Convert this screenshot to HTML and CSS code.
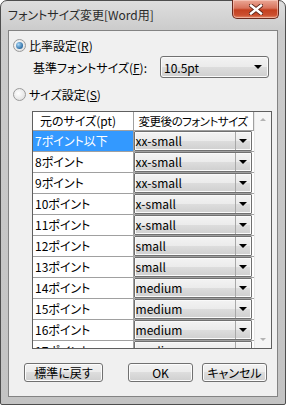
FILE: index.html
```html
<!DOCTYPE html>
<html lang="ja">
<head>
    <meta charset="UTF-8">
    <title>フォントサイズ変更[Word用]</title>
    <link rel="stylesheet" href="styles.css">
</head>
<body>

    <div class="window">
        <div class="titlebar">
            <span class="title">フォントサイズ変更[Word用]</span>
            <div class="close-btn">
                <svg width="14" height="11" viewBox="0 0 14 11">
                    <path d="M2 1.5 L12 9.5 M12 1.5 L2 9.5" stroke="#5a2418" stroke-width="4.2" stroke-linecap="square"/>
                    <path d="M2 1.5 L12 9.5 M12 1.5 L2 9.5" stroke="#ffffff" stroke-width="2.4" stroke-linecap="square"/>
                </svg>
            </div>
        </div>

        <div class="client">
            <div class="radio-row first">
                <span class="radio checked"></span>
                <span>比率設定(<u>R</u>)</span>
            </div>
            <div class="base-row">
                <span class="base-label">基準フォントサイズ(<u>F</u>):</span>
                <div class="combo big">
                    <span class="combo-text">10.5pt</span>
                    <span class="arrow"></span>
                </div>
            </div>
            <div class="radio-row second">
                <span class="radio"></span>
                <span>サイズ設定(<u>S</u>)</span>
            </div>

            <div class="grid">
                <div class="grid-body">
                    <div class="grid-head">
                        <div class="cell1">元のサイズ(pt)</div>
                        <div class="cell2">変更後のフォントサイズ</div>
                    </div>
                    <div class="row selected">
                        <div class="cell1">7ポイント以下</div>
                        <div class="cell2"><div class="combo"><span class="combo-text">xx-small</span><span class="arrow-box"><span class="arrow"></span></span></div></div>
                    </div>
                    <div class="row">
                        <div class="cell1">8ポイント</div>
                        <div class="cell2"><div class="combo"><span class="combo-text">xx-small</span><span class="arrow-box"><span class="arrow"></span></span></div></div>
                    </div>
                    <div class="row">
                        <div class="cell1">9ポイント</div>
                        <div class="cell2"><div class="combo"><span class="combo-text">xx-small</span><span class="arrow-box"><span class="arrow"></span></span></div></div>
                    </div>
                    <div class="row">
                        <div class="cell1">10ポイント</div>
                        <div class="cell2"><div class="combo"><span class="combo-text">x-small</span><span class="arrow-box"><span class="arrow"></span></span></div></div>
                    </div>
                    <div class="row">
                        <div class="cell1">11ポイント</div>
                        <div class="cell2"><div class="combo"><span class="combo-text">x-small</span><span class="arrow-box"><span class="arrow"></span></span></div></div>
                    </div>
                    <div class="row">
                        <div class="cell1">12ポイント</div>
                        <div class="cell2"><div class="combo"><span class="combo-text">small</span><span class="arrow-box"><span class="arrow"></span></span></div></div>
                    </div>
                    <div class="row">
                        <div class="cell1">13ポイント</div>
                        <div class="cell2"><div class="combo"><span class="combo-text">small</span><span class="arrow-box"><span class="arrow"></span></span></div></div>
                    </div>
                    <div class="row">
                        <div class="cell1">14ポイント</div>
                        <div class="cell2"><div class="combo"><span class="combo-text">medium</span><span class="arrow-box"><span class="arrow"></span></span></div></div>
                    </div>
                    <div class="row">
                        <div class="cell1">15ポイント</div>
                        <div class="cell2"><div class="combo"><span class="combo-text">medium</span><span class="arrow-box"><span class="arrow"></span></span></div></div>
                    </div>
                    <div class="row">
                        <div class="cell1">16ポイント</div>
                        <div class="cell2"><div class="combo"><span class="combo-text">medium</span><span class="arrow-box"><span class="arrow"></span></span></div></div>
                    </div>
                    <div class="row">
                        <div class="cell1">17ポイント</div>
                        <div class="cell2"><div class="combo"><span class="combo-text">medium</span><span class="arrow-box"><span class="arrow"></span></span></div></div>
                    </div>
                </div>
                <div class="vscroll">
                    <span class="sb-up"></span>
                    <span class="sb-down"></span>
                </div>
            </div>

            <div class="buttons">
                <div class="btn reset">標準に戻す</div>
                <div class="btn ok">OK</div>
                <div class="btn cancel">キャンセル</div>
            </div>
        </div>
    </div>

</body>
</html>
```

FILE: styles.css
```css
body {
    margin: 0;
    font-family: "Noto Sans CJK JP", "DejaVu Sans", sans-serif;
    font-feature-settings: "palt";
    font-size: 12px;
    color: #000;
    background: #ffffff;
}
.window {
    width: 286px;
    height: 405px;
    box-sizing: border-box;
    border: 1px solid #4e4e4e;
    border-radius: 7px 7px 2px 2px;
    background: linear-gradient(#dedede, #cbcbcb 30px, #c3c3c3);
    padding: 0 7px 7px;
    display: flex;
    flex-direction: column;
}
.titlebar {
    height: 29px;
    display: flex;
    align-items: flex-start;
}
.title {
    flex: 1;
    padding-top: 7px;
    line-height: 14px;
    color: #2a2a2a;
}
.close-btn {
    width: 47px;
    height: 19px;
    box-sizing: border-box;
    margin-top: -1px;
    margin-right: -1px;
    border: 1px solid #6a2a1e;
    border-top: none;
    border-radius: 0 0 5px 5px;
    background: linear-gradient(#eba896, #d8735c 45%, #c4401f 55%, #cc5030 85%, #e4916f);
    box-shadow: inset 0 0 0 1px rgba(255, 220, 210, 0.5);
    display: flex;
    align-items: center;
    justify-content: center;
}
.client {
    flex: 1;
    box-sizing: border-box;
    border: 1px solid #838383;
    background: #f0f0f0;
    display: flex;
    flex-direction: column;
}
.radio-row {
    display: flex;
    align-items: center;
    gap: 3px;
    height: 16px;
    margin-left: 4px;
}
.radio-row.first {
    margin-top: 6px;
}
.radio-row.second {
    margin-top: 8px;
}
.radio {
    width: 13px;
    height: 13px;
    box-sizing: border-box;
    border: 1px solid #9a9a9a;
    border-radius: 50%;
    background: radial-gradient(circle at 40% 40%, #ffffff, #d9d9d9);
    display: flex;
    align-items: center;
    justify-content: center;
}
.radio.checked::after {
    content: "";
    width: 7px;
    height: 7px;
    border-radius: 50%;
    background: radial-gradient(circle at 35% 35%, #a9d7f7, #2e6fa6 70%, #1c4c78);
}
.base-row {
    display: flex;
    align-items: center;
    height: 22px;
    margin-top: 3px;
    padding-left: 24px;
}
.base-label {
    width: 127px;
}
.combo {
    box-sizing: border-box;
    border: 1px solid #707070;
    border-radius: 2px;
    background: linear-gradient(#f3f3f3, #ebebeb 50%, #dddddd 50%, #cfcfcf);
    box-shadow: inset 0 0 0 1px #fafafa;
    display: flex;
    align-items: center;
}
.combo.big {
    width: 109px;
    height: 22px;
    border-radius: 3px;
}
.combo.big .combo-text {
    flex: 1;
    padding-left: 3px;
}
.combo.big .arrow {
    margin-right: 6px;
}
.arrow {
    width: 0;
    height: 0;
    border-left: 4px solid transparent;
    border-right: 4px solid transparent;
    border-top: 4px solid #000;
}
.grid {
    margin: 9px 0 0 23px;
    width: 240px;
    height: 238px;
    box-sizing: border-box;
    border: 1px solid #5f5f5f;
    background: #fff;
    display: flex;
}
.grid-body {
    width: 222px;
    overflow: hidden;
}
.grid-head, .row {
    display: flex;
}
.grid-head {
    height: 19px;
    line-height: 18px;
}
.row {
    height: 21px;
    line-height: 20px;
}
.cell1 {
    width: 101px;
    box-sizing: border-box;
    border-right: 1px solid #a0a0a0;
    border-bottom: 1px solid #a0a0a0;
    padding-left: 2px;
    white-space: nowrap;
}
.cell2 {
    width: 121px;
    box-sizing: border-box;
    border-bottom: 1px solid #a0a0a0;
    white-space: nowrap;
}
.grid-head .cell1 {
    padding-left: 7px;
}
.grid-head .cell2 {
    padding-left: 5px;
    border-right: 1px solid #a0a0a0;
    font-size: 11.5px;
    letter-spacing: -0.5px;
}
.row.selected .cell1 {
    background: #3399ff;
    color: #fff;
}
.row .combo {
    width: 118px;
    height: 20px;
    border-radius: 1px;
}
.row .combo-text {
    flex: 1;
    padding-left: 1px;
}
.arrow-box {
    width: 16px;
    height: 100%;
    box-sizing: border-box;
    border-left: 1px solid #a8a8a8;
    display: flex;
    align-items: center;
    justify-content: center;
}
.vscroll {
    width: 16px;
    background: #f5f5f5;
    border-left: 1px solid #e6e6e6;
    display: flex;
    flex-direction: column;
    justify-content: space-between;
    align-items: center;
    padding: 6px 0 7px;
}
.sb-up, .sb-down {
    width: 0;
    height: 0;
    border-left: 3px solid transparent;
    border-right: 3px solid transparent;
}
.sb-up {
    border-bottom: 3px solid #b4b4b4;
}
.sb-down {
    border-top: 3px solid #b4b4b4;
}
.buttons {
    display: flex;
    margin-top: 14px;
    height: 19px;
}
.btn {
    box-sizing: border-box;
    height: 19px;
    border: 1px solid #707070;
    border-radius: 3px;
    background: linear-gradient(#f2f2f2, #ebebeb 50%, #dddddd 50%, #cfcfcf);
    box-shadow: inset 0 0 0 1px #fcfcfc;
    display: flex;
    align-items: center;
    justify-content: center;
    line-height: 14px;
}
.btn.reset {
    width: 79px;
    margin-left: 15px;
}
.btn.ok {
    width: 65px;
    margin-left: 25px;
}
.btn.cancel {
    width: 65px;
    margin-left: 9px;
}
```
